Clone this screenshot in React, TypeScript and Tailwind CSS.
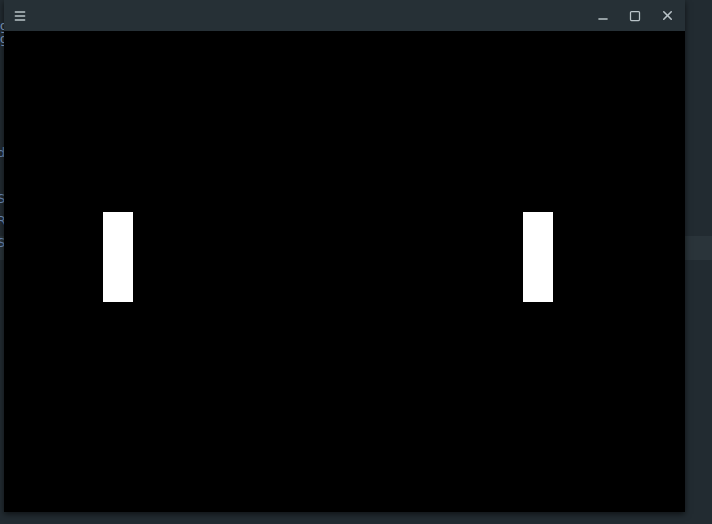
import { Minus, Square, X, Menu } from "lucide-react";

export default function App() {
  return (
    <div className="relative h-[524px] w-[712px] overflow-hidden bg-[#222b31]" style={{ fontFamily: "'DejaVu Sans', sans-serif" }}>
      {/* desktop fragments behind the window */}
      <div className="absolute left-0 top-[236px] h-[24px] w-full bg-[#2a343a]" />
      <div className="absolute left-0 top-[20px] flex w-[6px] flex-col text-[12px] leading-[13px] text-[#8aa4c8]">
        <span>g</span>
        <span>g</span>
      </div>
      <div className="absolute left-[-3px] top-[142px] flex flex-col text-[13px] leading-[22px] text-[#6d8bb8]">
        <span>d</span>
        <span className="mt-[24px]">S</span>
        <span>R</span>
        <span>S</span>
      </div>

      {/* window */}
      <div className="absolute left-[4px] top-0 flex h-[512px] w-[681px] flex-col shadow-[0_2px_6px_rgba(0,0,0,0.6)]">
        <div className="flex h-[31px] shrink-0 items-center bg-[#263036] px-[9px] text-[#b9c3c8]">
          <Menu size={14} strokeWidth={2.5} />
          <div className="flex-1" />
          <div className="flex items-center gap-[19px] pr-[1px]">
            <Minus size={14} strokeWidth={2.5} className="mt-[6px]" />
            <Square size={12} strokeWidth={2.5} />
            <X size={15} strokeWidth={2.5} />
          </div>
        </div>
        <div className="flex flex-1 items-center justify-between bg-black pl-[99px] pr-[132px]">
          <div className="mt-[-30px] h-[90px] w-[30px] bg-white" />
          <div className="mt-[-30px] h-[90px] w-[30px] bg-white" />
        </div>
      </div>
    </div>
  );
}
